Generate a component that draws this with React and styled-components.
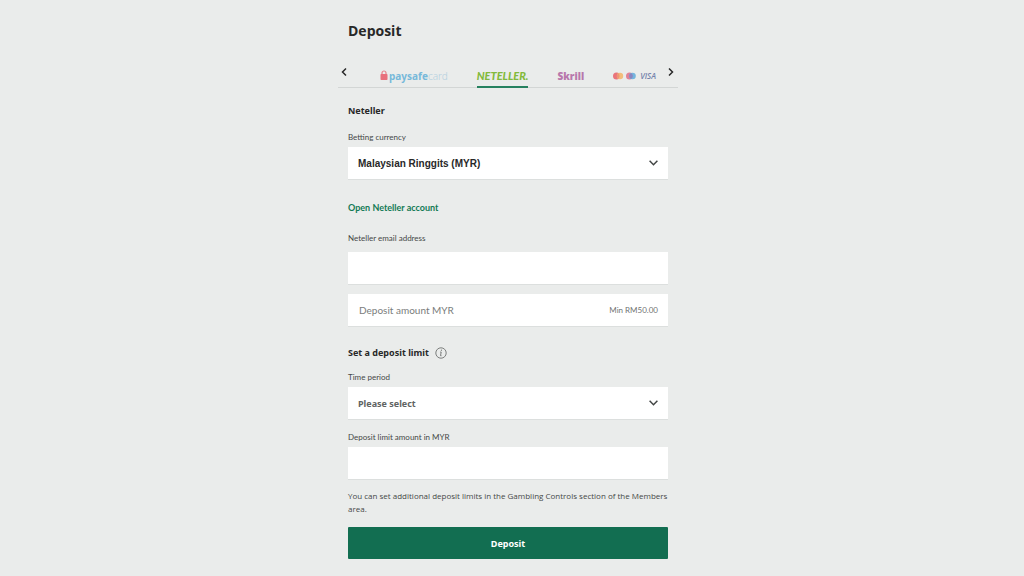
import { useState } from 'react';
import styled, { createGlobalStyle, css } from 'styled-components';

const GlobalStyle = createGlobalStyle`
  * {
    box-sizing: border-box;
  }

  body {
    margin: 0;
    background: #eaeceb;
    color: #282828;
    font-family: 'Open Sans', 'Noto Sans', sans-serif;
  }
`;

const Page = styled.main`
  display: flex;
  justify-content: center;
  padding: 21px 8px 16px 0;
`;

const Panel = styled.form`
  width: 100%;
  max-width: 340px;
`;

const Title = styled.h1`
  margin: 0 10px 16px;
  font-size: 14px;
  line-height: 20px;
`;

const Methods = styled.nav`
  display: flex;
  height: 31px;
  border-bottom: 1px solid #d3d6d5;
`;

const MethodList = styled.div`
  display: flex;
  flex: 1;
  justify-content: space-between;
  padding: 0 10px 0 30px;
`;

const ArrowButton = styled.button`
  display: flex;
  align-items: center;
  width: 12px;
  height: 30px;
  padding: 0;
  border: 0;
  background: none;
  color: #282828;
  cursor: pointer;
`;

const MethodButton = styled.button`
  display: flex;
  align-items: center;
  height: 31px;
  padding: 8px 0 0;
  border: 0;
  border-bottom: 2px solid transparent;
  background: none;
  cursor: pointer;

  ${({ $active }) => $active && css`
    border-bottom-color: #26815f;
  `}
`;

const Paysafe = styled.span`
  display: flex;
  align-items: center;
  gap: 1px;
  font-family: 'Noto Sans', sans-serif;
  font-size: 10px;
  font-weight: 700;
  line-height: 14px;
  color: #77b9da;

  em {
    font-style: normal;
    font-weight: 300;
    color: #b4d0df;
  }
`;

const NetellerMark = styled.span`
  font-family: Lato, sans-serif;
  font-size: 11px;
  font-style: italic;
  font-weight: 900;
  line-height: 14px;
  color: #83ba3b;
`;

const SkrillMark = styled.span`
  font-family: 'Open Sans', sans-serif;
  font-size: 10px;
  font-weight: 800;
  line-height: 14px;
  color: #b878ac;
`;

const Cards = styled.span`
  display: flex;
  align-items: center;
  gap: 4px;
`;

const VisaMark = styled.span`
  font-family: 'Open Sans', sans-serif;
  font-size: 8px;
  font-style: italic;
  font-weight: 600;
  line-height: 14px;
  color: #7583ab;
`;

const Body = styled.div`
  padding: 15px 10px 0;
`;

const Heading = styled.h2`
  display: flex;
  align-items: center;
  gap: 6px;
  margin: 0 0 ${({ $gap }) => $gap}px;
  font-family: 'Noto Sans', sans-serif;
  font-size: 9px;
  line-height: 16px;
`;

const InfoButton = styled.button`
  display: flex;
  padding: 0;
  border: 0;
  background: none;
  color: #6f7271;
  cursor: pointer;
`;

const Field = styled.div`
  margin-bottom: ${({ $gap }) => $gap}px;
`;

const Label = styled.label`
  display: block;
  margin-bottom: ${({ $gap }) => $gap || 4}px;
  font-family: Lato, sans-serif;
  font-size: 8px;
  line-height: 12px;
  color: #454847;
`;

const Box = styled.div`
  display: flex;
  align-items: center;
  height: 33px;
  border-bottom: 1px solid #dcdfde;
  background: #fff;
`;

const Input = styled.input`
  flex: 1;
  min-width: 0;
  height: 32px;
  padding: 0 11px;
  border: 0;
  background: none;
  color: #282828;
  font: 400 10px Lato, sans-serif;

  &::placeholder {
    color: #7a7d7c;
    opacity: 1;
  }
`;

const Hint = styled.span`
  padding-right: 10px;
  font-family: Lato, sans-serif;
  font-size: 8px;
  color: #707372;
`;

const SelectBox = styled(Box)`
  display: grid;

  > * {
    grid-area: 1 / 1;
  }

  svg {
    justify-self: end;
    margin-right: 10px;
    pointer-events: none;
  }
`;

const Select = styled.select`
  width: 100%;
  height: 32px;
  padding: 0 28px 0 10px;
  border: 0;
  appearance: none;
  background: none;
  color: ${({ $muted }) => ($muted ? '#606362' : '#282828')};
  font-family: ${({ $muted }) => ($muted ? "'Noto Sans'" : "'Liberation Sans'")}, sans-serif;
  font-size: ${({ $muted }) => ($muted ? 9 : 10)}px;
  font-weight: 700;
  cursor: pointer;
`;

const AccountLink = styled.a`
  display: block;
  width: fit-content;
  margin-bottom: 16px;
  font-family: Lato, sans-serif;
  font-size: 9px;
  font-weight: 700;
  line-height: 16px;
  color: #137a55;
  text-decoration: none;
`;

const Note = styled.p`
  margin: 0 0 12px;
  font-size: 8px;
  line-height: 13px;
  color: #454847;
`;

const Submit = styled.button`
  width: 100%;
  height: 32px;
  border: 0;
  border-radius: 1px;
  background: #126e51;
  color: #fff;
  font: 700 9px 'Noto Sans', sans-serif;
  cursor: pointer;
`;

const Arrow = ({ d }) => (
  <svg width="12" height="12" viewBox="0 0 12 12" fill="none" stroke="currentColor" strokeWidth="1.5" aria-hidden="true">
    <path d={d} />
  </svg>
);

const ChevronDown = () => (
  <svg width="9" height="6" viewBox="0 0 9 6" fill="none" stroke="#424544" strokeWidth="1.5" aria-hidden="true">
    <path d="M.6.8 4.5 4.7 8.4.8" />
  </svg>
);

const PaysafeLogo = () => (
  <Paysafe>
    <svg width="8" height="11" viewBox="0 0 8 11" aria-hidden="true">
      <path d="M2 5V3a2 2 0 0 1 4 0v2" fill="none" stroke="#e8808a" strokeWidth="1.2" />
      <rect x=".5" y="4" width="7" height="6" rx=".8" fill="#e8707c" />
    </svg>
    <span>paysafe<em>card</em></span>
  </Paysafe>
);

const CardsLogo = () => (
  <Cards>
    <svg width="23" height="8" viewBox="0 0 23 8" aria-hidden="true">
      <circle cx="3.5" cy="4" r="3.5" fill="#e9747b" />
      <circle cx="7" cy="4" r="3.2" fill="#f3bd7c" />
      <path d="M5.2 1.2a3.5 3.5 0 0 1 0 5.6 3.5 3.5 0 0 1 0-5.6" fill="#ee9573" />
      <circle cx="16.5" cy="4" r="3.5" fill="#e18297" />
      <circle cx="19.5" cy="4" r="3.3" fill="#75b5de" />
      <path d="M18 .9a3.5 3.5 0 0 1 0 6.2A3.5 3.5 0 0 1 18 .9" fill="#8b86bf" />
    </svg>
    <VisaMark>VISA</VisaMark>
  </Cards>
);

const methods = [
  { id: 'paysafecard', logo: <PaysafeLogo /> },
  { id: 'neteller', logo: <NetellerMark>NETELLER.</NetellerMark> },
  { id: 'skrill', logo: <SkrillMark>Skrill</SkrillMark> },
  { id: 'cards', logo: <CardsLogo /> },
];

export default function App() {
  const [method, setMethod] = useState('neteller');

  return (
    <>
      <GlobalStyle />
      <Page>
        <Panel onSubmit={(e) => e.preventDefault()}>
          <Title>Deposit</Title>

          <Methods aria-label="Payment methods">
            <ArrowButton type="button" aria-label="Previous">
              <Arrow d="M8 2.5 4.5 6 8 9.5" />
            </ArrowButton>
            <MethodList>
              {methods.map(({ id, logo }) => (
                <MethodButton key={id} type="button" $active={id === method} onClick={() => setMethod(id)}>
                  {logo}
                </MethodButton>
              ))}
            </MethodList>
            <ArrowButton type="button" aria-label="Next">
              <Arrow d="M3 2.5 6.5 6 3 9.5" />
            </ArrowButton>
          </Methods>

          <Body>
            <Heading $gap={12}>Neteller</Heading>

            <Field $gap={20}>
              <Label htmlFor="currency">Betting currency</Label>
              <SelectBox>
                <Select id="currency">
                  <option>Malaysian Ringgits (MYR)</option>
                </Select>
                <ChevronDown />
              </SelectBox>
            </Field>

            <AccountLink href="#neteller">Open Neteller account</AccountLink>

            <Field $gap={9}>
              <Label htmlFor="email" $gap={8}>Neteller email address</Label>
              <Box>
                <Input id="email" type="email" />
              </Box>
            </Field>

            <Field $gap={18}>
              <Box>
                <Input aria-label="Deposit amount MYR" placeholder="Deposit amount MYR" />
                <Hint>Min RM50.00</Hint>
              </Box>
            </Field>

            <Heading $gap={10}>
              Set a deposit limit
              <InfoButton type="button" aria-label="About deposit limits">
                <svg width="12" height="12" viewBox="0 0 12 12" fill="none" stroke="currentColor" aria-hidden="true">
                  <circle cx="6" cy="6" r="5.2" strokeWidth=".9" />
                  <path d="M5.2 5h1L5.5 8.7h1" strokeWidth=".9" />
                  <circle cx="6.4" cy="3.2" r=".6" fill="currentColor" stroke="none" />
                </svg>
              </InfoButton>
            </Heading>

            <Field $gap={11}>
              <Label htmlFor="period">Time period</Label>
              <SelectBox>
                <Select id="period" $muted>
                  <option>Please select</option>
                </Select>
                <ChevronDown />
              </SelectBox>
            </Field>

            <Field $gap={9}>
              <Label htmlFor="limit">Deposit limit amount in MYR</Label>
              <Box>
                <Input id="limit" />
              </Box>
            </Field>

            <Note>
              You can set additional deposit limits in the Gambling Controls section of the Members area.
            </Note>

            <Submit type="submit">Deposit</Submit>
          </Body>
        </Panel>
      </Page>
    </>
  );
}
